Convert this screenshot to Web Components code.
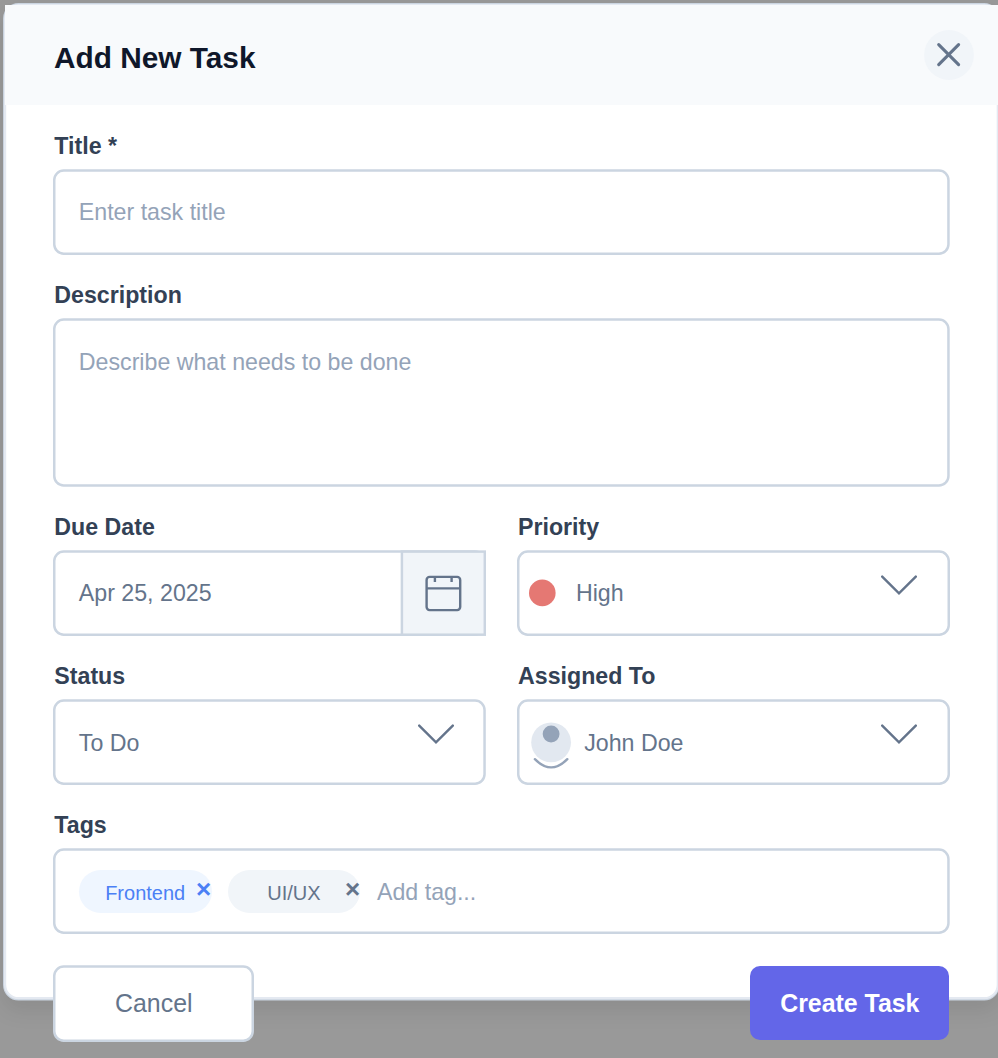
<!DOCTYPE html>
<html lang="en">
<head>
<meta charset="utf-8">
<title>Add New Task</title>
<style>
  html, body { margin: 0; height: 1058px; overflow: hidden; background: #999; }
  body { font-family: "Liberation Sans", Arial, sans-serif; color: #64748b; }
</style>
</head>
<body>
<task-dialog>
  <dialog-header slot="header">Add New Task</dialog-header>
  <form-field label="Title *"><outline-box><place-holder>Enter task title</place-holder></outline-box></form-field>
  <form-field label="Description"><outline-box tall><place-holder>Describe what needs to be done</place-holder></outline-box></form-field>
  <field-row>
    <form-field label="Due Date"><date-box>Apr 25, 2025</date-box></form-field>
    <form-field label="Priority"><select-box kind="dot">High</select-box></form-field>
  </field-row>
  <field-row>
    <form-field label="Status"><select-box>To Do</select-box></form-field>
    <form-field label="Assigned To"><select-box kind="avatar">John Doe</select-box></form-field>
  </field-row>
  <form-field label="Tags">
    <outline-box tags>
      <tag-chip tone="blue">Frontend</tag-chip>
      <tag-chip>UI/UX</tag-chip>
      <place-holder style="margin-left:.6px">Add tag...</place-holder>
    </outline-box>
  </form-field>
  <action-button slot="footer">Cancel</action-button>
  <action-button slot="footer" primary>Create Task</action-button>
</task-dialog>

<script>
const define = (name, html, setup) => customElements.define(name, class extends HTMLElement {
  constructor() {
    super();
    this.attachShadow({ mode: 'open' }).innerHTML =
      '<style>*{box-sizing:border-box}:host{box-sizing:border-box}</style>' + html;
  }
  connectedCallback() { if (setup) setup(this, this.shadowRoot); }
});

define('task-dialog', `
  <style>
    :host { display: block; position: relative; z-index: 0; width: 998px; height: 1058px; overflow: hidden; }
    .frame { position: absolute; left: 0; top: 0; z-index: -1; overflow: visible;
             filter: drop-shadow(0 10px 10px rgba(0,0,0,.08)); }
    .header { padding: 5px 0 0 4.5px; height: 104.6px; }
    .body { padding: 29.6px 48px 0 53.3px; display: flex; flex-direction: column; gap: 28.2px; }
    .footer { display: flex; justify-content: space-between; align-items: flex-start;
              padding: 31px 48.6px 0 53.3px; }
  </style>
  <svg class="frame" width="998" height="1058">
    <rect x="4.5" y="4.4" width="993.6" height="994.6" rx="14" fill="#fff" stroke="#cbd5e1" stroke-width="2.9"/>
    <rect x="5.1" y="5" width="992.7" height="993.2" rx="13.5" fill="#fff" stroke="#e4e9f1" stroke-width="2.2"/>
  </svg>
  <div class="header"><slot name="header"></slot></div>
  <div class="body"><slot></slot></div>
  <div class="footer"><slot name="footer"></slot></div>`);

define('dialog-header', `
  <style>
    :host { display: flex; justify-content: space-between; height: 99.5px; background: #f8fafc;
            padding: 24.5px 24.5px 0 49.5px; }
    h1 { margin: 11px 0 0; font-size: 29.8px; line-height: 34px; height: 34px; color: #0f172a; white-space: nowrap; }
    svg { display: block; }
  </style>
  <h1><slot></slot></h1>
  <svg width="50" height="50" viewBox="0 0 50 50">
    <circle cx="25" cy="25" r="24.9" fill="#f1f5f9"/>
    <path d="M14.7 14.7L34.6 34.6M34.6 14.7L14.7 34.6" stroke="#64748b" stroke-width="3.1" stroke-linecap="round"/>
  </svg>`);

define('field-row', `
  <style>:host { display: grid; grid-template-columns: 432.8px 433px; justify-content: space-between; }</style>
  <slot></slot>`);

define('form-field', `
  <style>
    :host { display: block; }
    .label { font-weight: bold; font-size: 23.2px; line-height: 24px; height: 24px; margin: 0 0 11px 1px;
             color: #334155; white-space: nowrap; }
  </style>
  <div class="label"></div><slot></slot>`,
  (el, root) => { root.querySelector('.label').textContent = el.getAttribute('label'); });

const frameStyle = `
  .frame { position: absolute; left: 0; top: 0; width: 100%; height: 100%; z-index: -1; overflow: visible; }
  .frame .line { x: 1.25px; y: 1.6px; width: calc(100% - 2.5px); height: calc(100% - 2.7px);
                 fill: #fff; stroke: #cbd5e1; stroke-width: 2.49px; }`;
const frame = '<svg class="frame"><rect class="line" rx="9.5"/></svg>';

define('outline-box', `
  <style>${frameStyle}
    :host { display: flex; align-items: center; position: relative; z-index: 0; height: 85.8px;
            padding-left: 25.5px; gap: 16px; }
    :host([tall]) { height: 168.6px; align-items: flex-start; padding-top: 28.5px; }
    :host([tags]) { padding-top: 1.6px; }
  </style>${frame}<slot></slot>`);

define('place-holder', `
  <style>:host { display: block; color: #94a3b8; font-size: 23.2px; line-height: 30px; white-space: nowrap; }</style>
  <slot></slot>`);

define('date-box', `
  <style>${frameStyle}
    :host { display: flex; position: relative; z-index: 0; height: 85.8px; padding-left: 25.5px;
            align-items: center; justify-content: space-between; font-size: 23.2px; }
    span { padding-top: 1.8px; }
    .cal { display: block; flex: none; }
  </style>${frame}<span><slot></slot></span>
  <svg class="cal" width="86" height="85.8" viewBox="0 0 86 85.8">
    <rect x="1.9" y="1.6" width="82.9" height="83.1" fill="#f1f5f9" stroke="#cbd5e1" stroke-width="2.49"/>
    <g fill="none" stroke="#64748b" stroke-width="2.4">
      <rect x="26.6" y="26.9" width="33.6" height="33.2" rx="3"/>
      <path d="M26.6 38.4H60.2M34.9 26.9V31.9M51.6 26.9V31.9"/>
    </g>
  </svg>`);

define('select-box', `
  <style>${frameStyle}
    :host { display: flex; position: relative; z-index: 0; height: 85.8px; padding: 0 32.6px 0 25.5px;
            align-items: center; font-size: 23.2px; }
    :host([kind="dot"]) { padding-left: 12.4px; }
    :host([kind="avatar"]) { padding-left: 14px; }
    svg.lead { display: none; flex: none; overflow: visible; }
    :host([kind="dot"]) .dot, :host([kind="avatar"]) .avatar { display: block; }
    .dot { margin-right: 19.5px; }
    .avatar { margin-right: 13.2px; }
    span { padding-top: 3.4px; }
    :host([kind="dot"]) span { padding-top: 1.8px; }
    .arrow { margin: 0 0 16px auto; }
  </style>${frame}
  <svg class="lead dot" width="27" height="27"><circle cx="13.3" cy="13.9" r="13.3" fill="#e57873"/></svg>
  <svg class="lead avatar" width="40" height="40">
    <circle cx="20.1" cy="20.4" r="19.9" fill="#e2e8f0"/>
    <circle cx="20.1" cy="12" r="8.4" fill="#94a3b8"/>
    <path d="M3.9 37.2Q20.1 53.6 36.3 37.2" fill="none" stroke="#94a3b8" stroke-width="2.4" stroke-linecap="round"/>
  </svg>
  <span><slot></slot></span>
  <svg class="arrow" width="37" height="22" viewBox="0 0 37 22">
    <path d="M2.2 2.6L19 19.4L35.8 2.6" fill="none" stroke="#64748b" stroke-width="2.4" stroke-linecap="round"/>
  </svg>`);

define('tag-chip', `
  <style>
    :host { display: grid; grid-template-columns: 1fr; position: relative; width: 132.8px; height: 43px; flex: none; border-radius: 21.5px;
            background: #f1f5f9; color: #64748b; font-size: 20px; line-height: 46px; text-align: center; }
    :host([tone="blue"]) { background: #eff6ff; color: #4b80f5; }
    b { position: absolute; right: .3px; top: 0; font-size: 26px; line-height: 38px; }
  </style><span><slot></slot></span><b>×</b>`);

define('action-button', `
  <style>${frameStyle}
    :host { display: flex; align-items: center; justify-content: center; position: relative; z-index: 0;
            width: 201px; height: 76.8px; font-size: 24.9px; }
    :host([primary]) { width: 199.2px; height: 74.6px; margin-top: 1.1px; font-weight: bold; color: #fff;
                       background: #6366e8; border-radius: 10px; }
    :host([primary]) .frame { display: none; }
    span { padding-top: 1.4px; }
  </style>${frame}<span><slot></slot></span>`);
</script>
</body>
</html>
